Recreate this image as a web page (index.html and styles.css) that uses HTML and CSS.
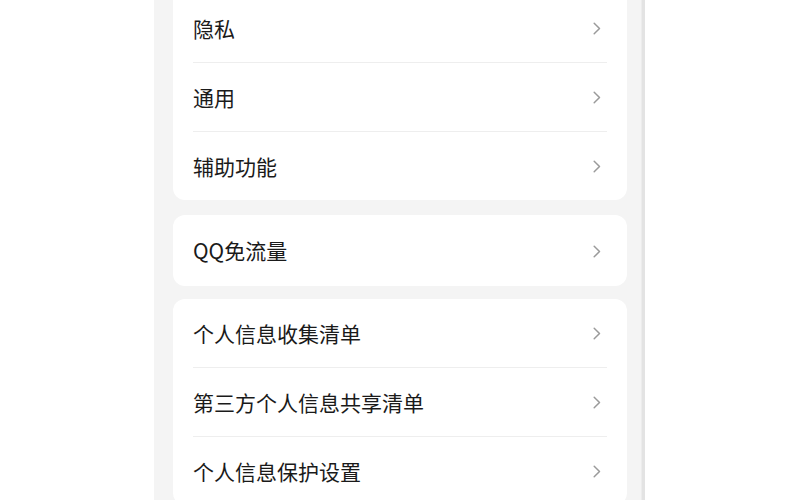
FILE: index.html
```html
<!DOCTYPE html>
<html lang="zh-CN">
<head>
<meta charset="utf-8">
<title>设置</title>
<link rel="stylesheet" href="styles.css">
</head>
<body>
<div class="page">
  <div class="side"></div>
  <div class="phone">
    <div class="card card-first">
      <div class="row"><span class="label">隐私</span><svg class="chev" viewBox="0 0 8 13" width="8" height="13"><path d="M1.2 1.2 L6.5 6.5 L1.2 11.8"/></svg></div>
      <div class="row"><span class="label">通用</span><svg class="chev" viewBox="0 0 8 13" width="8" height="13"><path d="M1.2 1.2 L6.5 6.5 L1.2 11.8"/></svg></div>
      <div class="row"><span class="label">辅助功能</span><svg class="chev" viewBox="0 0 8 13" width="8" height="13"><path d="M1.2 1.2 L6.5 6.5 L1.2 11.8"/></svg></div>
    </div>
    <div class="card card-mid">
      <div class="row row-tall"><span class="label">QQ免流量</span><svg class="chev" viewBox="0 0 8 13" width="8" height="13"><path d="M1.2 1.2 L6.5 6.5 L1.2 11.8"/></svg></div>
    </div>
    <div class="card card-last">
      <div class="row"><span class="label">个人信息收集清单</span><svg class="chev" viewBox="0 0 8 13" width="8" height="13"><path d="M1.2 1.2 L6.5 6.5 L1.2 11.8"/></svg></div>
      <div class="row"><span class="label">第三方个人信息共享清单</span><svg class="chev" viewBox="0 0 8 13" width="8" height="13"><path d="M1.2 1.2 L6.5 6.5 L1.2 11.8"/></svg></div>
      <div class="row"><span class="label">个人信息保护设置</span><svg class="chev" viewBox="0 0 8 13" width="8" height="13"><path d="M1.2 1.2 L6.5 6.5 L1.2 11.8"/></svg></div>
    </div>
  </div>
  <div class="strip"></div>
</div>
</body>
</html>
```

FILE: styles.css
```css
html, body {
  margin: 0;
  padding: 0;
  background: #ffffff;
  height: 100%;
  overflow: hidden;
}
.page {
  display: flex;
  height: 500px;
  overflow: hidden;
}
.side {
  width: 154px;
  flex: none;
}
.phone {
  width: 454px;
  flex: none;
  background: #f4f4f4;
  padding: 0 14px 0 19px;
  display: flex;
  flex-direction: column;
}
.strip {
  width: 4px;
  flex: none;
  background: #e3e3e3;
  border-left: 1px solid #ececec;
  box-sizing: border-box;
}
.card {
  background: #ffffff;
  border-radius: 12px;
  flex: none;
}
.card-first {
  margin-top: -6px;
  border-radius: 0 0 12px 12px;
}
.card-mid {
  margin-top: 15px;
}
.card-last {
  margin-top: 13px;
}
.row {
  height: 68px;
  margin: 0 20px;
  padding-right: 6px;
  display: flex;
  align-items: center;
  justify-content: space-between;
  border-bottom: 1px solid #eeeeee;
}
.row:last-child {
  border-bottom: none;
}
.row-tall {
  height: 71px;
}
.label {
  font-family: "Noto Sans CJK SC", "Noto Sans", sans-serif;
  font-size: 21px;
  color: #1a1a1a;
  line-height: 1;
}
.chev {
  fill: none;
  stroke: #9a9a9a;
  stroke-width: 1.5;
  stroke-linecap: round;
  stroke-linejoin: round;
  margin-top: 1px;
}
```
